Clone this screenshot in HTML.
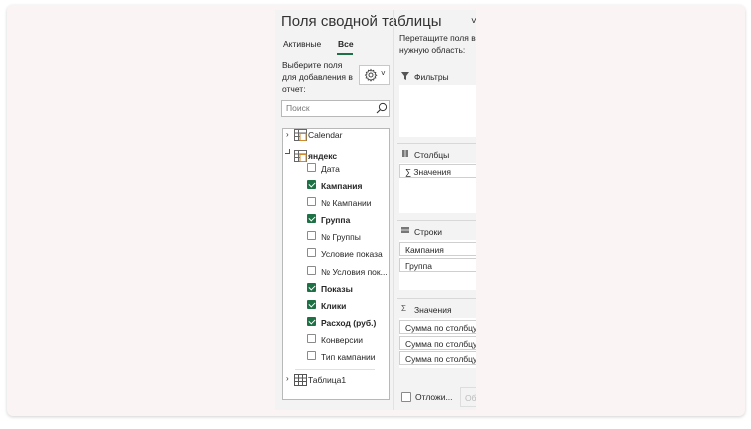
<!DOCTYPE html>
<html><head><meta charset="utf-8"><style>
*{margin:0;padding:0;box-sizing:border-box}
body{width:751px;height:429px;background:#fff;position:relative;overflow:hidden;font-family:"Liberation Sans","DejaVu Sans",sans-serif;color:#262626}
.card{position:absolute;left:7px;top:5px;width:738px;height:411px;background:#faf4f4;border-radius:6px;box-shadow:0 1px 3px rgba(0,0,0,.18)}
.panel{position:absolute;left:275px;top:10px;width:201px;height:400px;background:#f3f3f3;overflow:hidden}
.a{position:absolute;white-space:nowrap}
.t{font-size:8.5px}
.b{font-weight:bold}
.cb{position:absolute;width:9px;height:9px;border:1px solid #8a8a8a;background:#fff;border-radius:1px}
.cb.on{background:#1e7145;border-color:#1e7145}
.cb.on:after{content:"";position:absolute;left:2px;top:0px;width:3px;height:5px;border:solid #fff;border-width:0 1px 1px 0;transform:rotate(45deg)}
.box{position:absolute;left:124px;width:80px;background:#fff}
.item{position:absolute;left:124px;width:80px;height:14px;background:#fff;border:1px solid #cfcfcf;font-size:8.5px;padding:2px 0 0 5px;white-space:nowrap}
.sep{position:absolute;left:122px;width:80px;height:1px;background:#d8d8d8}
</style></head><body>
<div class="card"></div>
<div class="panel">
  <div class="a" style="left:6px;top:3px;font-size:15px;color:#333">Поля сводной таблицы</div>
  <div class="a" style="left:196px;top:6px;font-size:10px">˅</div>
  <div class="a t" style="left:8px;top:29px">Активные</div>
  <div class="a t b" style="left:63px;top:29px">Все</div>
  <div class="a" style="left:62px;top:43px;width:16px;height:2px;background:#1e7145"></div>
  <div class="a t" style="left:7px;top:49px;line-height:12px;white-space:normal;width:75px">Выберите поля для добавления в отчет:</div>
  <div class="a" style="left:84px;top:55px;width:31px;height:20px;background:#fff;border:1px solid #c8c8c8"></div>
  <svg class="a" style="left:89px;top:58px" width="14" height="14" viewBox="0 0 14 14"><circle cx="7" cy="7" r="2" fill="none" stroke="#444" stroke-width="1"/><path d="M7 1.5l1 1.5 1.7-.6.3 1.8 1.8.3-.6 1.7 1.5 1-1.5 1 .6 1.7-1.8.3-.3 1.8-1.7-.6-1 1.5-1-1.5-1.7.6-.3-1.8-1.8-.3.6-1.7L1.5 7 3 6l-.6-1.7 1.8-.3.3-1.8 1.7.6z" fill="none" stroke="#444" stroke-width=".9"/></svg>
  <div class="a" style="left:106px;top:59px;font-size:8px">˅</div>
  <div class="a" style="left:6px;top:90px;width:109px;height:17px;background:#fff;border:1px solid #b8b8b8"></div>
  <div class="a t" style="left:11px;top:93px;color:#777">Поиск</div>
  <svg class="a" style="left:101px;top:92px" width="12" height="12" viewBox="0 0 12 12"><circle cx="7" cy="5" r="3.6" fill="none" stroke="#333" stroke-width="1"/><path d="M4.4 7.6L1 11" stroke="#333" stroke-width="1.1"/></svg>

  <div class="a" style="left:7px;top:118px;width:108px;height:272px;background:#fff;border:1px solid #b8b8b8"></div>
  <div class="a" style="left:11px;top:120px;font-size:8px">›</div>
  <svg class="a" style="left:19px;top:119px" width="13" height="12" viewBox="0 0 13 12"><rect x=".5" y=".5" width="12" height="11" fill="#fff" stroke="#666"/><path d="M.5 4h12M.5 7.5h12M4.5.5v11" stroke="#666"/><rect x="6" y="4.5" width="6" height="7" fill="#fff" stroke="#d08a2c"/></svg>
  <div class="a t" style="left:33px;top:120px">Calendar</div>
  <div class="a" style="left:10px;top:139px;width:5px;height:5px;border-left:1px solid #555;border-bottom:1px solid #555;transform:scaleX(-1)"></div>
  <svg class="a" style="left:19px;top:140px" width="13" height="12" viewBox="0 0 13 12"><rect x=".5" y=".5" width="12" height="11" fill="#fff" stroke="#666"/><path d="M.5 4h12M.5 7.5h12M4.5.5v11" stroke="#666"/><rect x="6" y="4.5" width="6" height="7" fill="#fff" stroke="#d08a2c"/></svg>
  <div class="a t b" style="left:33px;top:141px">яндекс</div>

  <div class="cb" style="left:32px;top:153px"></div><div class="a t" style="left:46px;top:154px">Дата</div>
  <div class="cb on" style="left:32px;top:170px"></div><div class="a t b" style="left:46px;top:171px">Кампания</div>
  <div class="cb" style="left:32px;top:187px"></div><div class="a t" style="left:46px;top:188px">№ Кампании</div>
  <div class="cb on" style="left:32px;top:204px"></div><div class="a t b" style="left:46px;top:205px">Группа</div>
  <div class="cb" style="left:32px;top:221px"></div><div class="a t" style="left:46px;top:222px">№ Группы</div>
  <div class="cb" style="left:32px;top:238px"></div><div class="a t" style="left:46px;top:239px">Условие показа</div>
  <div class="cb" style="left:32px;top:256px"></div><div class="a t" style="left:46px;top:257px">№ Условия пок...</div>
  <div class="cb on" style="left:32px;top:273px"></div><div class="a t b" style="left:46px;top:274px">Показы</div>
  <div class="cb on" style="left:32px;top:290px"></div><div class="a t b" style="left:46px;top:291px">Клики</div>
  <div class="cb on" style="left:32px;top:307px"></div><div class="a t b" style="left:46px;top:308px">Расход (руб.)</div>
  <div class="cb" style="left:32px;top:324px"></div><div class="a t" style="left:46px;top:325px">Конверсии</div>
  <div class="cb" style="left:32px;top:341px"></div><div class="a t" style="left:46px;top:342px">Тип кампании</div>
  <div class="a" style="left:20px;top:359px;width:80px;height:1px;background:#e0e0e0"></div>
  <div class="a" style="left:11px;top:364px;font-size:8px">›</div>
  <svg class="a" style="left:19px;top:364px" width="13" height="12" viewBox="0 0 13 12"><rect x=".5" y=".5" width="12" height="11" fill="#fff" stroke="#555"/><path d="M.5 4h12M.5 7.5h12M4.5.5v11M8.5.5v11" stroke="#555"/></svg>
  <div class="a t" style="left:33px;top:365px">Таблица1</div>

  <div class="a" style="left:118px;top:0;width:1px;height:400px;background:#e2e2e2"></div>
  <div class="a t" style="left:124px;top:22px;line-height:12px">Перетащите поля в<br>нужную область:</div>

  <svg class="a" style="left:126px;top:62px" width="8" height="8" viewBox="0 0 8 8"><path d="M0 0h8L5 4v4L3 7V4z" fill="#555"/></svg>
  <div class="a t" style="left:139px;top:62px">Фильтры</div>
  <div class="box" style="top:75px;height:52px"></div>
  <div class="sep" style="top:133px"></div>
  <div class="a" style="left:127px;top:140px;width:6px;height:7px;border-left:2px solid #777;border-right:2px solid #777;background:#aaa"></div>
  <div class="a t" style="left:139px;top:140px">Столбцы</div>
  <div class="box" style="top:153px;height:50px"></div>
  <div class="item" style="top:154px">∑ Значения</div>
  <div class="sep" style="top:210px"></div>
  <div class="a" style="left:126px;top:217px;width:8px;height:6px;border-top:2px solid #777;border-bottom:2px solid #777;background:#aaa"></div>
  <div class="a t" style="left:139px;top:217px">Строки</div>
  <div class="box" style="top:230px;height:50px"></div>
  <div class="item" style="top:232px">Кампания</div>
  <div class="item" style="top:248px">Группа</div>
  <div class="sep" style="top:288px"></div>
  <div class="a" style="left:126px;top:294px;font-size:8px;color:#555">Σ</div>
  <div class="a t" style="left:139px;top:295px">Значения</div>
  <div class="box" style="top:308px;height:50px"></div>
  <div class="item" style="top:310px">Сумма по столбцу</div>
  <div class="item" style="top:326px">Сумма по столбцу</div>
  <div class="item" style="top:341px">Сумма по столбцу</div>

  <div class="cb" style="left:126px;top:382px;width:10px;height:10px"></div>
  <div class="a t" style="left:140px;top:382px">Отложи...</div>
  <div class="a" style="left:185px;top:377px;width:30px;height:20px;border:1px solid #ddd;background:#f3f3f3;font-size:8.5px;color:#bbb;padding:5px 0 0 4px">Об</div>
</div>
</body></html>
